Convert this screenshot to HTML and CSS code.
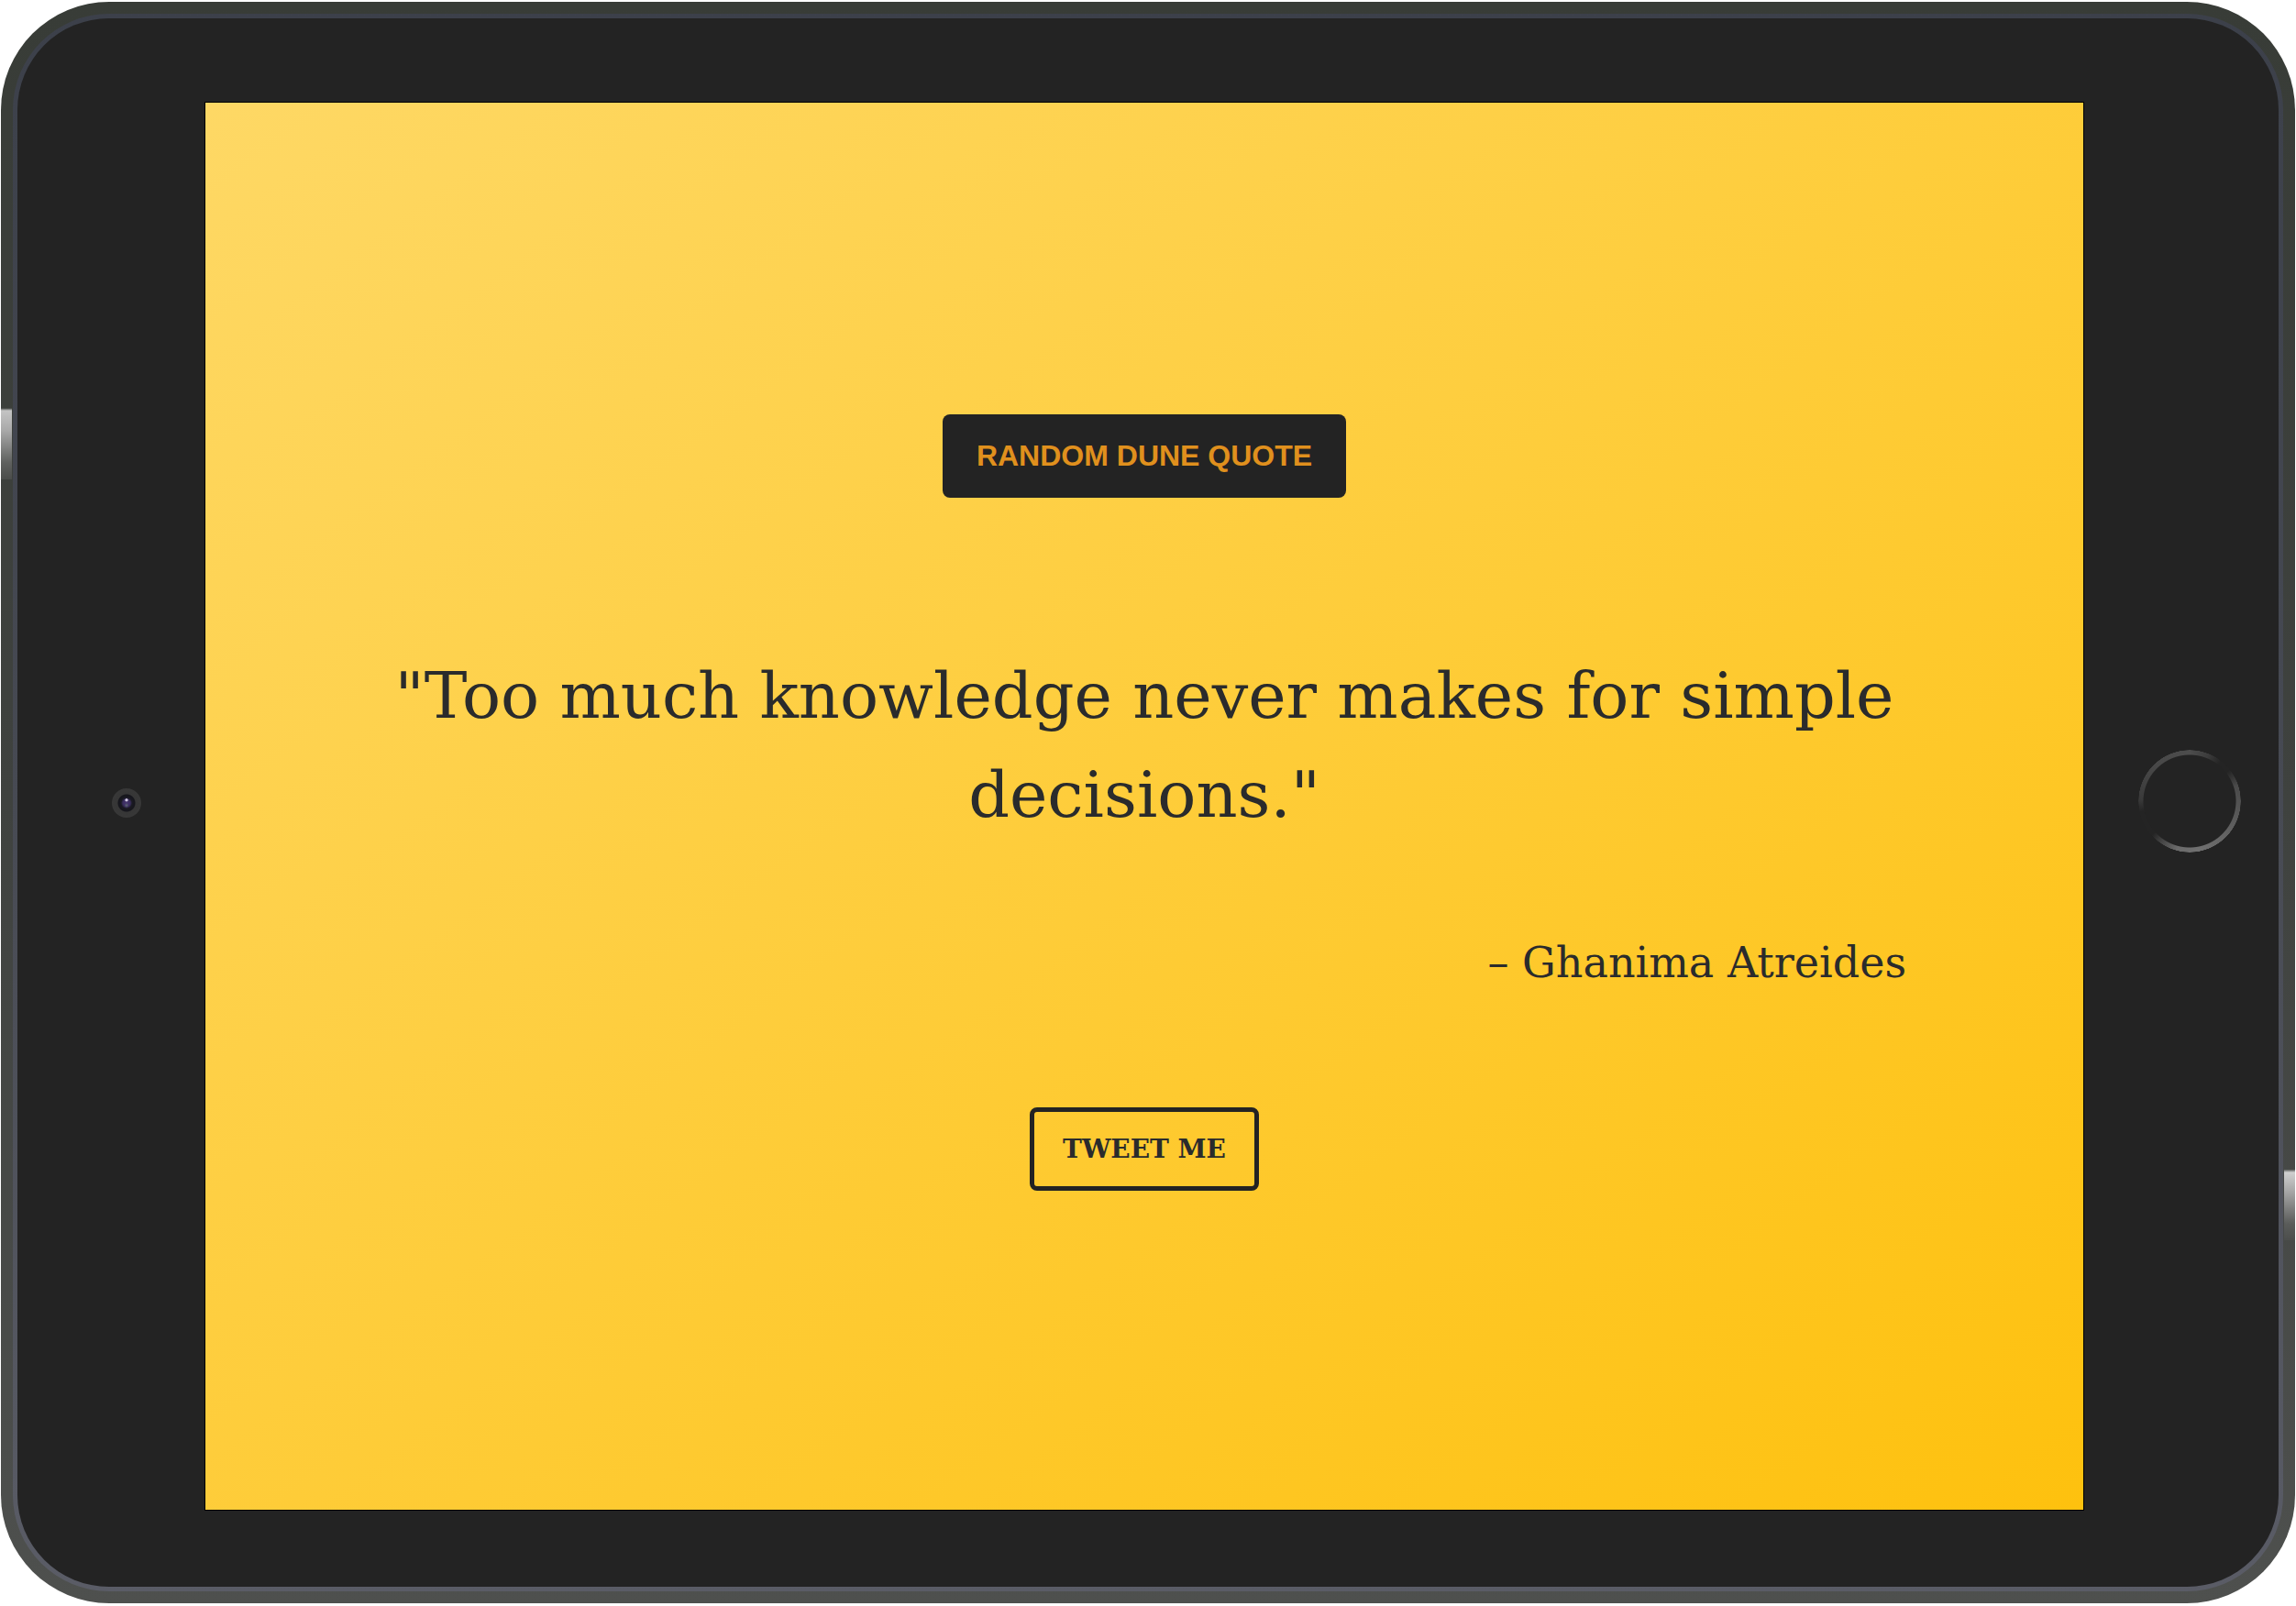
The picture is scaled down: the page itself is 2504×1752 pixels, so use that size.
FILE: index.html
```html
<!DOCTYPE html>
<html lang="en">
<head>
<meta charset="utf-8">
<title>Random Dune Quote</title>
<link rel="stylesheet" href="styles.css">
</head>
<body>
<div class="ipad">
  <span class="side-btn side-btn-left"></span>
  <span class="side-btn side-btn-right"></span>
  <div class="ring">
    <div class="bezel">
      <div class="zone zone-left"><span class="camera"></span></div>
      <main class="screen">
        <div class="content">
          <button class="quote-btn">RANDOM DUNE QUOTE</button>
          <div class="quote-box">
            <p class="quote">"Too much knowledge never makes for simple decisions."</p>
            <p class="author">– Ghanima Atreides</p>
          </div>
          <a class="tweet-btn">TWEET ME</a>
        </div>
      </main>
      <div class="zone zone-right"><span class="home"></span></div>
    </div>
  </div>
</div>
</body>
</html>
```

FILE: styles.css
```css
html, body {
  margin: 0;
  padding: 0;
  background: #ffffff;
}

body {
  width: 2504px;
  height: 1752px;
  overflow: hidden;
}

.ipad {
  position: relative;
  box-sizing: border-box;
  margin: 2px 0 0 1px;
  width: 2502px;
  height: 1747px;
  padding: 13px;
  border-radius: 118px;
  background: linear-gradient(to bottom, #383c37 0%, #3f423f 50%, #4e504e 100%);
}

.side-btn {
  position: absolute;
  width: 12px;
  height: 78px;
}

.side-btn-left {
  left: 0;
  top: 443px;
  background: linear-gradient(to bottom, #333833 0px, #c4c4c4 3px, #a8a8a8 25px, #5e605e 60px, #4a4c4a 78px);
}

.side-btn-right {
  right: 0;
  top: 1273px;
  background: linear-gradient(to bottom, #343834 0px, #cfcfcf 4px, #a6a6a6 25px, #5a5c5a 60px, #4c4e4c 78px);
}

.ring {
  box-sizing: border-box;
  height: 100%;
  padding: 5px;
  border-radius: 105px;
  background: linear-gradient(to bottom, #3c404a 0%, #474a53 50%, #5a5c66 100%);
}

.bezel {
  box-sizing: border-box;
  height: 100%;
  border-radius: 100px;
  background: #232323;
  display: grid;
  grid-template-columns: 204px 1fr 212px;
  padding: 91px 0 83px 0;
}

.zone {
  display: flex;
  align-items: center;
  padding-bottom: 8px;
}

.zone-left {
  padding-left: 103px;
}

.zone-right {
  padding-left: 59px;
  padding-bottom: 12px;
}

.camera {
  width: 32px;
  height: 32px;
  border-radius: 50%;
  background:
    radial-gradient(circle at 50% 40%, #cfc8e0 0, #cfc8e0 1.2px, transparent 2px),
    radial-gradient(circle at 50% 58%, #5a6570 0, transparent 2.5px),
    radial-gradient(circle, #46366e 0, #3a2d60 4px, #1a1a22 6px, #16161c 9px, #363636 10px, #383838 16px);
}

.home {
  width: 112px;
  height: 112px;
  border-radius: 50%;
  background: conic-gradient(from 0deg,
    #4d4d4d 0deg, #3c3c3c 22deg, #242424 38deg, #242424 52deg,
    #4a4a4a 72deg, #5e5e5e 120deg, #707070 170deg, #6a6a6a 195deg,
    #444444 215deg, #242424 228deg, #242424 258deg, #3a3a3a 272deg,
    #474747 310deg, #4d4d4d 360deg);
  -webkit-mask: radial-gradient(circle, transparent 50px, #000 51px, #000 55.5px, transparent 56px);
  mask: radial-gradient(circle, transparent 50px, #000 51px, #000 55.5px, transparent 56px);
}

.screen {
  border: 1px solid #000000;
  background: linear-gradient(to bottom right, #fed865, #fec10e);
  display: flex;
  align-items: center;
  justify-content: center;
  padding-bottom: 8px;
}

.content {
  display: flex;
  flex-direction: column;
  align-items: center;
}

.quote-btn {
  width: 440px;
  height: 91px;
  border: none;
  border-radius: 8px;
  background: #232323;
  color: #e0901d;
  font-family: "Liberation Sans", Arial, sans-serif;
  font-weight: 700;
  font-size: 32px;
  padding: 0;
  cursor: pointer;
}

.quote-box {
  width: 1662px;
  margin-top: 162px;
}

.quote {
  margin: 0;
  text-align: center;
  font-family: "DejaVu Serif", serif;
  font-size: 70px;
  line-height: 108px;
  color: #2a2b2c;
}

.author {
  margin: 95px 0 0 0;
  text-align: right;
  font-family: "DejaVu Serif", serif;
  font-size: 46px;
  line-height: 69px;
  color: #2a2b2c;
}

.tweet-btn {
  box-sizing: border-box;
  margin-top: 123px;
  width: 250px;
  height: 91px;
  border: 5px solid #232323;
  border-radius: 8px;
  display: flex;
  align-items: center;
  justify-content: center;
  font-family: "DejaVu Serif", serif;
  font-weight: 700;
  font-size: 28px;
  color: #2a2b2c;
  text-decoration: none;
  cursor: pointer;
}
```
